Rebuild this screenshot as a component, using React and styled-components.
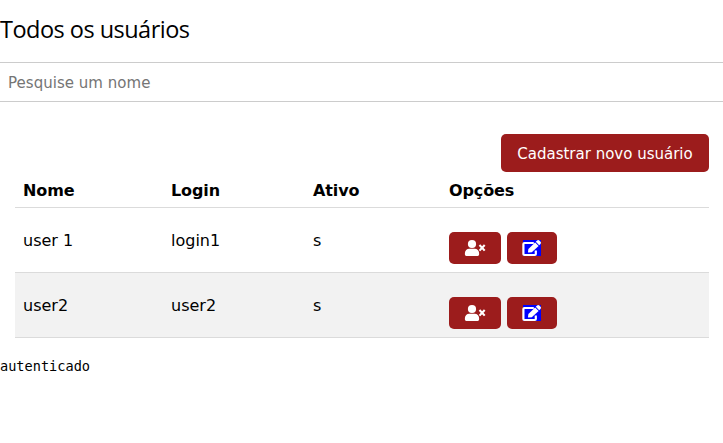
import React from "react";
import styled, { createGlobalStyle } from "styled-components";

const GlobalStyle = createGlobalStyle`
  * { box-sizing: border-box; }
  body { margin: 0; background: #fff; color: #000; font-family: "DejaVu Sans", Verdana, sans-serif; overflow: hidden; }
`;

const Page = styled.main`
  display: flex;
  flex-direction: column;
  height: 443px;
`;

const Title = styled.h1`
  margin: 11px 0 15px;
  font: 400 23.5px/36px "Open Sans", "Noto Sans", sans-serif;
  letter-spacing: -0.52px;
`;

const SearchInput = styled.input`
  width: 100%;
  height: 40px;
  padding: 2px 8px 0;
  border: solid #ccc;
  border-width: 1px 0;
  outline: none;
  font: 15px "DejaVu Sans", sans-serif;
  letter-spacing: 0.03px;
  &::placeholder { color: #757575; opacity: 1; }
`;

const Content = styled.section`
  display: flex;
  flex-direction: column;
  padding: 32px 14px 0 15px;
`;

const Button = styled.button`
  display: inline-flex;
  align-items: center;
  justify-content: center;
  border: 0;
  border-radius: 5px;
  background: #9c1c1c;
  color: #fff;
`;

const RegisterButton = styled(Button)`
  align-self: flex-end;
  width: 208px;
  height: 38px;
  padding: 2px 0 0;
  font: 15px "DejaVu Sans", sans-serif;
  white-space: nowrap;
`;

const IconButton = styled(Button)`
  width: ${({ $width }) => $width}px;
  height: 32px;
  padding: 0;
`;

const Glyph = styled.svg`
  display: block;
  height: 16px;
  width: ${({ $width }) => $width}px;
  background: ${({ $fill }) => $fill || "transparent"};
  overflow: visible;
`;

const Row = styled.div`
  display: grid;
  grid-template-columns: 148px 142px 136px 1fr;
  align-items: center;
  height: ${({ $head }) => ($head ? 36 : 65)}px;
  padding: ${({ $head }) => ($head ? "2px 8px 0" : "0 8px")};
  border-bottom: 1px solid #dbdbdb;
  background: ${({ $shaded }) => ($shaded ? "#f2f2f2" : "#fff")};
  font-size: 16px;
  font-weight: ${({ $head }) => ($head ? 700 : 400)};
  letter-spacing: ${({ $head }) => ($head ? -0.12 : 0)}px;
`;

const Actions = styled.div`
  display: flex;
  gap: 6px;
  padding-top: 16px;
`;

const Status = styled.pre`
  margin: 20px 0 0;
  font: 13.6px/16px "DejaVu Sans Mono", monospace;
`;

const RemoveUserIcon = () => (
  <Glyph $width={20} viewBox="0 0 20 16" fill="currentColor" aria-hidden="true">
    <circle cx="7" cy="4" r="4.1" />
    <path d="M4.2 8.7h5.6a4.3 4.3 0 0 1 4.3 4.3v1.6a1.4 1.4 0 0 1-1.4 1.4H1.3A1.4 1.4 0 0 1-.1 14.6V13a4.3 4.3 0 0 1 4.3-4.3Z" />
    <path d="m14.5 5 5.2 5.6m0-5.6-5.2 5.6" stroke="currentColor" strokeWidth="2.1" />
  </Glyph>
);

const EditIcon = () => (
  <Glyph $width={18} $fill="#00f" viewBox="0 0 18 16" fill="none" aria-hidden="true">
    <path d="M10.8 3H1.4a1 1 0 0 0-1 1v10a1 1 0 0 0 1 1h10.4a1 1 0 0 0 1-1v-3.6" stroke="currentColor" strokeWidth="2.2" />
    <path d="m12.1 2.4 3.5 3.5-6.8 6.3-3.2.4c-.3 0-.6-.3-.6-.6l.4-3 6.7-6.6Z" fill="currentColor" />
    <path d="m12.8 1.8 1.3-1.3a1.6 1.6 0 0 1 2.2 0l1.2 1.2a1.6 1.6 0 0 1 0 2.2l-1.3 1.3-3.4-3.4Z" fill="currentColor" />
  </Glyph>
);

const users = [
  { name: "user 1", login: "login1", active: "s" },
  { name: "user2", login: "user2", active: "s" },
];

export default function App() {
  return (
    <Page>
      <GlobalStyle />
      <Title>Todos os usuários</Title>
      <SearchInput placeholder="Pesquise um nome" />
      <Content>
        <RegisterButton>Cadastrar novo usuário</RegisterButton>
        <Row $head>
          <span>Nome</span>
          <span>Login</span>
          <span>Ativo</span>
          <span>Opções</span>
        </Row>
        {users.map((user, index) => (
          <Row key={user.name} $shaded={index % 2 === 1}>
            <span>{user.name}</span>
            <span>{user.login}</span>
            <span>{user.active}</span>
            <Actions>
              <IconButton $width={52} aria-label="Remover"><RemoveUserIcon /></IconButton>
              <IconButton $width={50} aria-label="Editar"><EditIcon /></IconButton>
            </Actions>
          </Row>
        ))}
      </Content>
      <Status>autenticado</Status>
    </Page>
  );
}
